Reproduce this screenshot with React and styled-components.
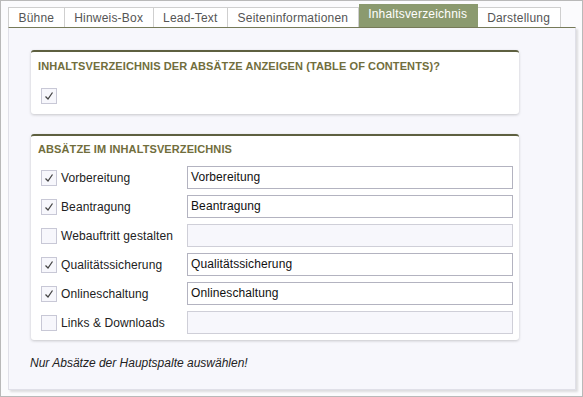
import { createGlobalStyle, styled } from "styled-components"

const GlobalStyle = createGlobalStyle`
body{
    margin:0;
    background:#fff;
    font-family:"Liberation Sans", Arial, sans-serif;
}
`
const Frame = styled.div`
width:583px;
height:397px;
box-sizing:border-box;
border:1px solid #b9b9b9;
background:#fbfbfd;
display:flex;
flex-direction:column;
padding:3px 6px 6px 7px;
`
const TabBar = styled.div`
display:flex;
align-items:flex-end;
height:23px;
`
const Tab = styled.div`
box-sizing:border-box;
height:${p => p.$active ? "23px" : "20px"};
padding:${p => p.$active ? "1px 9.5px 0" : "0 9.5px"};
line-height:${p => p.$active ? "17px" : "20px"};
font-size:12px;
letter-spacing:0.2px;
color:${p => p.$active ? "#fff" : "#555"};
background:${p => p.$active ? "#8b9a6f" : "#fff"};
border:1px solid ${p => p.$active ? "#8b9a6f" : "#cfcfcf"};
border-bottom:none;
border-left:${p => p.$first ? "1px solid #cfcfcf" : "none"};
white-space:nowrap;
`
const Panel = styled.div`
flex:1;
box-sizing:border-box;
background:#f7f7fc;
border:1px solid #e0e0e8;
border-top:1px solid #767a58;
box-shadow:2px 2px 2px rgba(0,0,0,0.12);
padding:22px 0 0 22px;
display:flex;
flex-direction:column;
gap:20px;
`
const Card = styled.div`
width:488px;
box-sizing:border-box;
background:#fff;
border-top:2px solid #5e6040;
border-radius:3px;
box-shadow:0 1px 3px rgba(0,0,0,0.2);
padding:${p => p.$tight ? "6px 6px 6px 7px" : "7px 6px 10px 7px"};
`
const Heading = styled.h3`
margin:0;
font-size:11px;
line-height:14px;
font-weight:700;
letter-spacing:0.1px;
color:#716e3c;
text-transform:uppercase;
`
const Single = styled.div`
margin:15px 0 0 3px;
`
const Rows = styled.div`
margin-top:10px;
display:flex;
flex-direction:column;
gap:6px;
`
const Row = styled.div`
display:grid;
grid-template-columns:146px 1fr;
align-items:center;
padding-left:3px;
`
const CheckLabel = styled.label`
display:flex;
align-items:center;
gap:4px;
font-size:12px;
letter-spacing:0.1px;
color:#222;
`
const Box = styled.span`
width:16px;
height:16px;
box-sizing:border-box;
border:1px solid #c8c8d6;
background:#f7f7fc;
display:flex;
align-items:center;
justify-content:center;
`
const Field = styled.div`
height:23px;
box-sizing:border-box;
border:1px solid ${p => p.$disabled ? "#cfcfd8" : "#b3b3c0"};
background:${p => p.$disabled ? "#f7f7fc" : "#fff"};
font-size:12px;
letter-spacing:0.1px;
line-height:21px;
padding-left:3px;
color:#111;
`
const Note = styled.p`
margin:-4px 0 0 -1px;
font-size:12px;
font-style:italic;
color:#222;
`

function Check({ checked }) {
    return (
        <Box>
            {checked && (
                <svg width="10" height="10" viewBox="0 0 10 10">
                    <polyline points="1.5,5.5 4,8 8.5,1.5" fill="none" stroke="#444" strokeWidth="1.3" />
                </svg>
            )}
        </Box>
    )
}

const TABS = ["Bühne", "Hinweis-Box", "Lead-Text", "Seiteninformationen", "Inhaltsverzeichnis", "Darstellung"]

const ROWS = [
    { label: "Vorbereitung", value: "Vorbereitung" },
    { label: "Beantragung", value: "Beantragung" },
    { label: "Webauftritt gestalten", value: null },
    { label: "Qualitätssicherung", value: "Qualitätssicherung" },
    { label: "Onlineschaltung", value: "Onlineschaltung" },
    { label: "Links & Downloads", value: null },
]

export default function App() {
    return (
        <>
            <GlobalStyle />
            <Frame>
                <TabBar>
                    {TABS.map((t, i) => (
                        <Tab key={t} $first={i === 0} $active={t === "Inhaltsverzeichnis"}>{t}</Tab>
                    ))}
                </TabBar>
                <Panel>
                    <Card>
                        <Heading>Inhaltsverzeichnis der Absätze anzeigen (table of contents)?</Heading>
                        <Single><Check checked /></Single>
                    </Card>
                    <Card $tight>
                        <Heading>Absätze im Inhaltsverzeichnis</Heading>
                        <Rows>
                            {ROWS.map(r => (
                                <Row key={r.label}>
                                    <CheckLabel>
                                        <Check checked={r.value !== null} />
                                        {r.label}
                                    </CheckLabel>
                                    <Field $disabled={r.value === null}>{r.value}</Field>
                                </Row>
                            ))}
                        </Rows>
                    </Card>
                    <Note>Nur Absätze der Hauptspalte auswählen!</Note>
                </Panel>
            </Frame>
        </>
    )
}
